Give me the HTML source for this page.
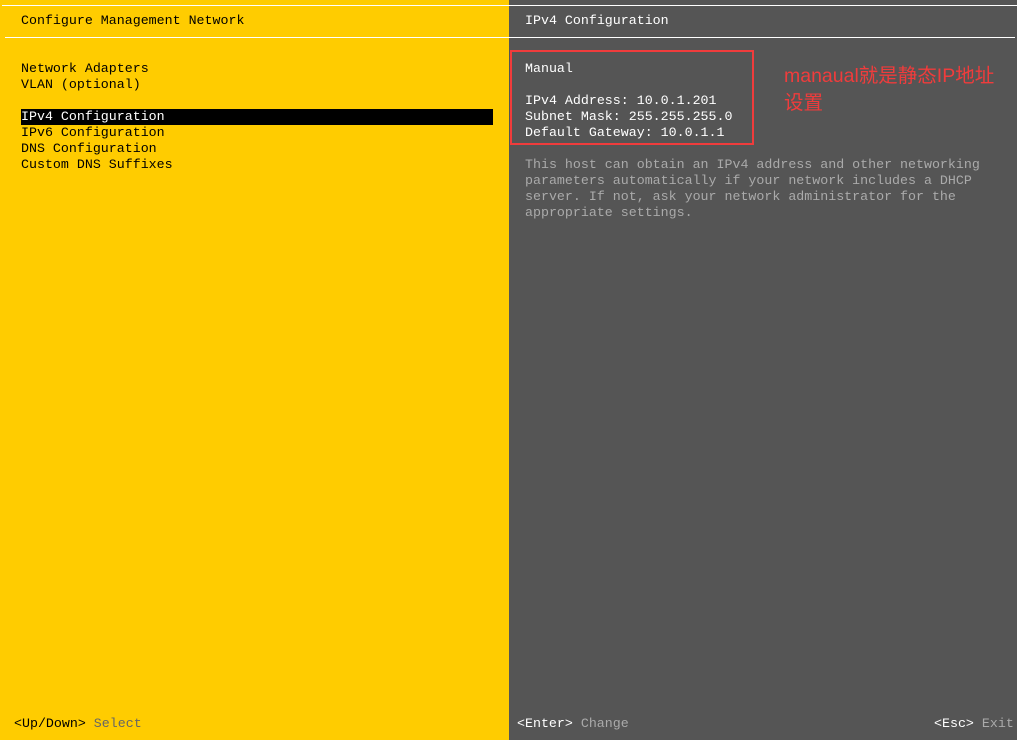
<!DOCTYPE html>
<html><head><meta charset="utf-8"><style>
body{margin:0;width:1017px;height:740px;overflow:hidden;background:#555;position:relative;font-family:"Liberation Mono",monospace;font-size:13.3px;}
.t{position:absolute;white-space:pre;line-height:16px;}
</style></head><body>
<div style="position:absolute;left:0;top:0;width:509px;height:740px;background:#ffcc00"></div>
<div style="position:absolute;left:2px;top:5px;width:1015px;height:1px;background:#fff"></div>
<div style="position:absolute;left:5px;top:37px;width:1010px;height:1px;background:#fff"></div>
<div class="t" style="left:21px;top:13px;color:#000">Configure Management Network</div>
<div class="t" style="left:525px;top:13px;color:#fff">IPv4 Configuration</div>
<div style="position:absolute;left:21px;top:109px;width:472px;height:16px;background:#000"></div>
<div class="t" style="left:21px;top:61px;color:#000">Network Adapters
VLAN (optional)

<span style="color:#fff">IPv4 Configuration</span>
IPv6 Configuration
DNS Configuration
Custom DNS Suffixes</div>
<div style="position:absolute;left:510px;top:50px;width:240px;height:91px;border:2px solid #f03c3c"></div>
<div class="t" style="left:525px;top:61px;color:#fff">Manual

IPv4 Address: 10.0.1.201
Subnet Mask: 255.255.255.0
Default Gateway: 10.0.1.1</div>
<div class="t" style="left:525px;top:157px;color:#aaa">This host can obtain an IPv4 address and other networking
parameters automatically if your network includes a DHCP
server. If not, ask your network administrator for the
appropriate settings.</div>
<div class="t" style="left:784px;top:63px;color:#f03c3c;font-family:'Liberation Sans','Noto Sans CJK SC',sans-serif;font-size:19.5px;line-height:27px">manaual就是静态IP地址
设置</div>
<div class="t" style="left:14px;top:716px;color:#000">&lt;Up/Down&gt; <span style="color:#666">Select</span></div>
<div class="t" style="left:517px;top:716px;color:#fff">&lt;Enter&gt; <span style="color:#aaa">Change</span></div>
<div class="t" style="left:934px;top:716px;color:#fff">&lt;Esc&gt; <span style="color:#aaa">Exit</span></div>
</body></html>
